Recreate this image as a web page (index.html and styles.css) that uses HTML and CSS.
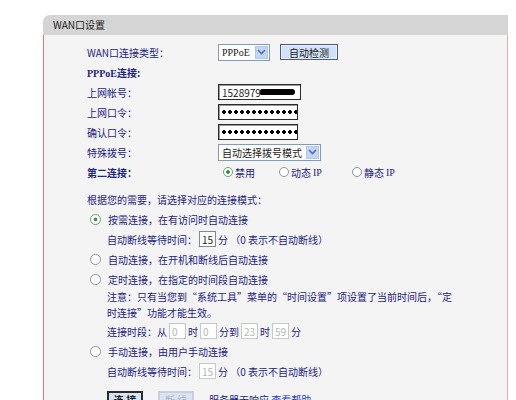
FILE: index.html
```html
<!DOCTYPE html>
<html lang="zh-CN">
<head>
<meta charset="utf-8">
<title>WAN口设置</title>
<link rel="stylesheet" href="styles.css">
</head>
<body>
<div class="panel">
  <div class="head">WAN口设置</div>
  <div class="body">
    <div class="form">
      <span class="lab">WAN口连接类型：</span>
      <span class="val">
        <span class="select w52"><span class="lat">PPPoE</span><span class="arrow"><svg width="9" height="6" viewBox="0 0 9 6"><path d="M1 1 L4.5 4.5 L8 1" fill="none" stroke="#4d6fb8" stroke-width="1.6"/></svg></span></span>
        <span class="btn detect">自动检测</span>
      </span>
      <span class="lab bold"><span class="lat">PPPoE</span>连接:</span>
      <span class="val"></span>
      <span class="lab">上网帐号：</span>
      <span class="val"><span class="box dark w83">1528979<span class="redact"></span></span></span>
      <span class="lab">上网口令：</span>
      <span class="val"><span class="box dark w80 dots"></span></span>
      <span class="lab">确认口令：</span>
      <span class="val"><span class="box dark w80 dots"></span></span>
      <span class="lab">特殊拨号：</span>
      <span class="val"><span class="select w102">自动选择拨号模式<span class="arrow"><svg width="9" height="6" viewBox="0 0 9 6"><path d="M1 1 L4.5 4.5 L8 1" fill="none" stroke="#4d6fb8" stroke-width="1.6"/></svg></span></span></span>
      <span class="lab bold">第二连接：</span>
      <span class="val radios">
        <span class="ropt r1"><span class="radio on"></span>禁用</span>
        <span class="ropt r2"><span class="radio"></span>动态 <span class="lat">IP</span></span>
        <span class="ropt"><span class="radio"></span>静态 <span class="lat">IP</span></span>
      </span>
    </div>

    <div class="modes">
      <div class="line">根据您的需要，请选择对应的连接模式：</div>
      <div class="line opt"><span class="radio on"></span>按需连接，在有访问时自动连接</div>
      <div class="line sub">自动断线等待时间：<span class="box num">15</span> 分 （0 表示不自动断线）</div>
      <div class="line opt"><span class="radio"></span>自动连接，在开机和断线后自动连接</div>
      <div class="line opt"><span class="radio"></span>定时连接，在指定的时间段自动连接</div>
      <div class="note">注意：只有当您到“系统工具”菜单的“时间设置”项设置了当前时间后，“定<br>时连接”功能才能生效。</div>
      <div class="line sub">连接时段：从 <span class="box num off">0</span> 时 <span class="box num off">0</span> 分到 <span class="box num off">23</span> 时 <span class="box num off">59</span> 分</div>
      <div class="line opt"><span class="radio"></span>手动连接，由用户手动连接</div>
      <div class="line sub">自动断线等待时间：<span class="box num off">15</span> 分 （0 表示不自动断线）</div>
      <div class="actions">
        <span class="btn act">连 接</span>
        <span class="btn act disabled">断 线</span>
        <span class="status">服务器无响应 <a class="help" href="#">查看帮助</a></span>
      </div>
    </div>
  </div>
</div>
</body>
</html>
```

FILE: styles.css
```css
html, body {
  margin: 0;
  padding: 0;
  background: #ffffff;
}
body {
  font-family: "Noto Sans CJK SC", "Noto Sans", sans-serif;
  font-size: 10px;
  color: #232385;
}
.lat {
  font-family: "Liberation Serif", "DejaVu Serif", serif;
}
.panel {
  margin: 15px 0 0 43px;
  width: 465px;
}
.head {
  height: 20px;
  line-height: 20px;
  background: #d5d5d5;
  border-top-left-radius: 7px;
  padding-left: 10px;
  color: #222222;
  font-size: 10px;
}
.body {
  background: #f4f4f4;
  border-left: 1px solid #e07a7a;
  border-right: 1px solid #eaaaaa;
  padding: 7px 0 40px 43px;
}
.form {
  display: grid;
  grid-template-columns: 131px 1fr;
  grid-auto-rows: 20px;
  align-items: center;
}
.lab {
  white-space: nowrap;
}
.bold {
  font-weight: bold;
}
.val {
  display: flex;
  align-items: center;
  gap: 10px;
}
.select {
  display: inline-flex;
  align-items: center;
  justify-content: space-between;
  box-sizing: border-box;
  height: 17px;
  border: 1px solid #7f9db9;
  background: #ffffff;
  padding: 0 1px 0 3px;
  color: #1a1a1a;
}
.w52 { width: 52px; }
.w102 { width: 103px; }
.arrow {
  width: 13px;
  height: 13px;
  box-sizing: border-box;
  background: #c5d6f4;
  border: 1px solid #b2c6ea;
  display: inline-flex;
  align-items: center;
  justify-content: center;
}
.btn {
  display: inline-flex;
  align-items: center;
  justify-content: center;
  box-sizing: border-box;
  color: #1a1a1a;
}
.detect {
  width: 58px;
  height: 16px;
  background: #d2e1f7;
  border: 1px solid #4e6070;
  box-shadow: inset 0 0 0 1px #e9f0fb;
}
.box {
  display: inline-flex;
  align-items: center;
  box-sizing: border-box;
  height: 16px;
  background: #ffffff;
  padding: 0 3px;
  color: #1a1a1a;
}
.dark {
  border: 1px solid #2a2a2a;
  box-shadow: inset 1px 1px 0 #9a9a9a;
}
.w83 { width: 83px; }
.w80 { width: 80px; }
.redact {
  display: inline-block;
  width: 35px;
  height: 6px;
  background: #050505;
  border-radius: 4px 6px 6px 3px;
  margin-left: -1px;
}
.dots {
  background-image: radial-gradient(circle, #000 1.6px, transparent 2.1px);
  background-size: 6px 16px;
  background-position: 2px -1px;
  background-repeat: repeat-x;
  background-color: #ffffff;
}
.radios {
  gap: 0;
  margin-left: 5px;
}
.ropt {
  display: inline-flex;
  align-items: center;
  gap: 2px;
}
.r1 { width: 56px; }
.r2 { width: 73px; }
.radio {
  display: inline-block;
  box-sizing: border-box;
  width: 10px;
  height: 10px;
  border-radius: 50%;
  border: 1px solid #8d949a;
  background: #ffffff;
}
.radio.on {
  border-color: #6e9c72;
  background: radial-gradient(circle, #3f9446 1.6px, #ffffff 2.2px);
}
.modes {
  margin-top: 7px;
  display: flex;
  flex-direction: column;
}
.line {
  height: 20px;
  display: flex;
  align-items: center;
  white-space: nowrap;
}
.opt {
  padding-left: 3px;
  gap: 7px;
}
.opt .radio {
  width: 11px;
  height: 11px;
}
.sub {
  padding-left: 20px;
}
.note {
  padding-left: 20px;
  line-height: 16px;
  white-space: nowrap;
}
.num {
  width: 17px;
  height: 16px;
  padding: 0 0 0 2px;
  border: 1px solid #7c8a96;
  margin: 0 2px;
}
.num.off {
  border-color: #c3cbc4;
  color: #b5b8b5;
}
.actions {
  margin-top: 10px;
  padding-left: 20px;
  display: flex;
  align-items: center;
  gap: 15px;
  height: 16px;
}
.act {
  width: 36px;
  height: 16px;
  background: #d8e4f6;
  border: 2px solid #2b2b2b;
  font-weight: bold;
  color: #1a1a1a;
}
.act.disabled {
  border: 2px solid #c9d0da;
  color: #b0b6c0;
  font-weight: normal;
}
.status {
  color: #232385;
}
.help {
  color: #1c3cd0;
  text-decoration: none;
}
```
